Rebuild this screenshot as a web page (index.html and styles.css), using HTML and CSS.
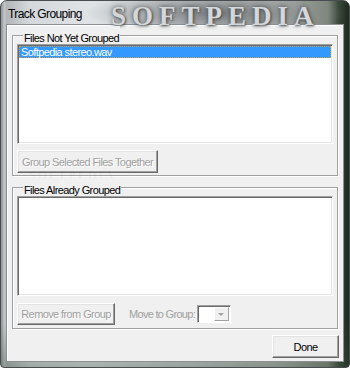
FILE: index.html
```html
<!DOCTYPE html>
<html lang="en">
<head>
    <meta charset="UTF-8">
    <meta name="viewport" content="width=device-width, initial-scale=1.0">
    <title>Track Grouping</title>
    <link rel="stylesheet" href="styles.css">
</head>
<body>
    <div class="window">
        <div class="titlebar">
            <span class="title">Track Grouping</span>
            <span class="watermark">SOFTPEDIA</span>
        </div>

        <div class="client">
            <fieldset class="group">
                <legend>Files Not Yet Grouped</legend>
                <div class="listbox">
                    <div class="item selected">Softpedia stereo.wav</div>
                </div>
                <div class="row">
                    <button class="btn btn-group" disabled>Group Selected Files Together</button>
                </div>
                <span class="watermark-faint">SOFTPEDIA</span>
            </fieldset>

            <fieldset class="group group-done">
                <legend>Files Already Grouped</legend>
                <div class="listbox"></div>
                <div class="row row-move">
                    <button class="btn btn-remove" disabled>Remove from Group</button>
                    <span class="label">Move to Group:</span>
                    <div class="combo">
                        <span class="combo-field"></span>
                        <span class="combo-arrow"></span>
                    </div>
                </div>
            </fieldset>

            <div class="actions">
                <button class="btn btn-done">Done</button>
            </div>
        </div>
    </div>
</body>
</html>
```

FILE: styles.css
```css
body {
    margin: 0;
    background: #fff;
    font-family: "Liberation Sans", Arial, sans-serif;
    font-size: 11px;
    letter-spacing: -0.6px;
    white-space: nowrap;
}

.window {
    width: 350px;
    height: 368px;
    box-sizing: border-box;
    border: 1px solid #4a4d4f;
    border-radius: 7px 7px 4px 4px;
    background:
        linear-gradient(180deg, rgba(255,255,255,0) 88%, rgba(60,80,60,0.35) 100%),
        linear-gradient(90deg, #8e9295 0, #c3c7ca 1%, #b2b6b9 1.6%, #d4d8db 8%, #dfe3e6 25%, #c8ccce 55%, #aeb3b1 80%, #7d867c 94%, #3a4a3a 97%, #1d271e 100%);
    overflow: hidden;
}

.titlebar {
    position: relative;
    height: 23px;
    padding-left: 7px;
    background: radial-gradient(ellipse 130px 22px at 215px 12px, rgba(90,94,96,0.7), rgba(130,134,136,0.3) 70%, rgba(0,0,0,0));
}

.title {
    display: inline-block;
    margin-top: 6px;
    font-size: 12px;
    color: #000;
    position: relative;
    z-index: 1;
}

.watermark {
    position: absolute;
    left: 110px;
    top: 0;
    font-family: "Liberation Serif", "Times New Roman", serif;
    font-weight: bold;
    font-size: 27px;
    letter-spacing: 6px;
    color: #d4d7d9;
    text-shadow: 0 0 5px #46494b, 1px 1px 2px #5c6062;
}

.client {
    width: 338px;
    height: 338px;
    margin-left: 5px;
    box-sizing: border-box;
    border: 1px solid #8d9093;
    box-shadow: inset 1px 1px 0 #fff;
    background: #f0f0f0;
    padding: 1px 5px 0;
    display: flex;
    flex-direction: column;
}

.group {
    position: relative;
    margin: 0;
    padding: 0 4px 2px;
    border: 1px solid #a0a0a0;
    box-shadow: inset 1px 1px 0 #fff, 1px 1px 0 #fff;
}

.group legend {
    padding: 6px 1px 0;
    margin-left: 6px;
    line-height: 12px;
    color: #000;
    background: #f0f0f0;
}

.group-done {
    margin-top: 2px;
    padding-bottom: 3px;
}

.listbox {
    height: 100px;
    box-sizing: border-box;
    border: 1px solid;
    border-color: #a0a0a0 #fff #fff #a0a0a0;
    box-shadow: inset 1px 1px 0 #696969, inset -1px -1px 0 #e3e3e3;
    background: #fff;
    padding: 1px;
}

.item {
    height: 12px;
    line-height: 12px;
    padding-left: 2px;
}

.item.selected {
    background: #3399ff;
    color: #fff;
    outline: 1px dotted #c89a58;
    outline-offset: -1px;
}

.row {
    display: flex;
    align-items: center;
    margin-top: 6px;
}

.row-move {
    margin-top: 7px;
}

.btn {
    box-sizing: border-box;
    height: 23px;
    padding: 0;
    border: 1px solid;
    border-color: #fff #696969 #696969 #fff;
    box-shadow: inset -1px -1px 0 #a0a0a0, inset 1px 1px 0 #e3e3e3;
    background: #f0f0f0;
    font-family: inherit;
    font-size: 11px;
    letter-spacing: inherit;
    color: #000;
}

.btn:disabled {
    color: #a0a0a0;
    text-shadow: 1px 1px 0 #fff;
}

.btn-group { width: 141px; }
.btn-remove { width: 98px; height: 22px; }
.btn-done { width: 67px; }

.label {
    margin-left: 14px;
    letter-spacing: -0.7px;
    color: #a0a0a0;
}

.combo {
    display: flex;
    width: 34px;
    height: 18px;
    margin-left: 2px;
    box-sizing: border-box;
    border: 1px solid;
    border-color: #a0a0a0 #fff #fff #a0a0a0;
    box-shadow: inset 1px 1px 0 #696969;
    background: #fff;
    padding: 1px;
}

.combo-field {
    flex: 1;
}

.combo-arrow {
    position: relative;
    width: 15px;
    box-sizing: border-box;
    border: 1px solid;
    border-color: #fff #a0a0a0 #a0a0a0 #fff;
    background: #f0f0f0;
}

.combo-arrow::after {
    content: "";
    position: absolute;
    left: 3px;
    top: 5px;
    border-left: 3px solid transparent;
    border-right: 3px solid transparent;
    border-top: 3px solid #a0a0a0;
}

.actions {
    display: flex;
    justify-content: flex-end;
    margin-top: 6px;
    margin-right: -1px;
}

.watermark-faint {
    position: absolute;
    left: 16px;
    top: 124px;
    font-family: "Liberation Serif", serif;
    font-weight: bold;
    font-size: 12px;
    letter-spacing: 2px;
    color: rgba(0, 0, 0, 0.05);
    pointer-events: none;
}
```
